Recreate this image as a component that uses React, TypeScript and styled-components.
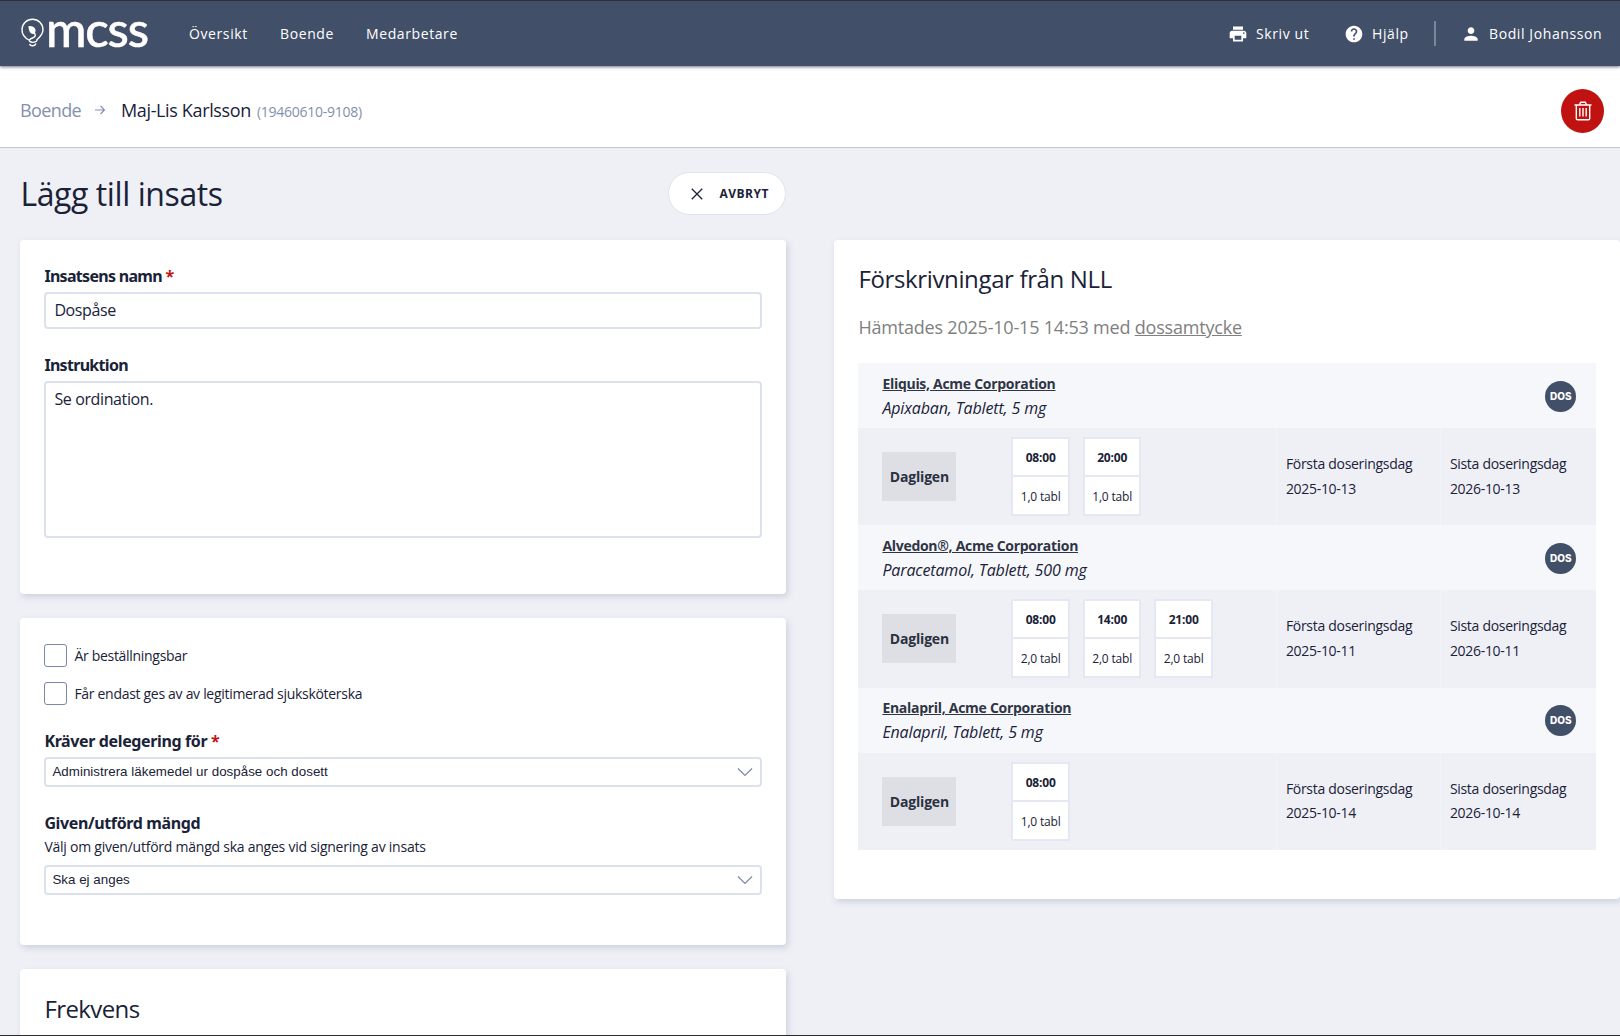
import * as React from 'react'
import styled, { createGlobalStyle } from 'styled-components'
import { MdPrint, MdHelp, MdPerson } from 'react-icons/md'

const GlobalStyle = createGlobalStyle`
  * {
    box-sizing: border-box;
  }

  body {
    margin: 0;
    height: 1036px;
    overflow: hidden;
    background: #eff0f6;
    color: #1a2238;
    font-family: 'Open Sans', 'Noto Sans', sans-serif;
  }

  svg {
    flex-shrink: 0;
  }
`

const Page = styled.div`
  height: 1036px;
  overflow: hidden;
  border-top: 1px solid #332f35;
  border-bottom: 1px solid #2b2b2e;
`

const Topbar = styled.nav`
  position: relative;
  display: flex;
  align-items: center;
  height: 65px;
  padding: 0 16px 0 21px;
  background: #424f68;
  color: white;
  box-shadow: 0 1px 3px rgba(66, 79, 104, 0.8);
`

const Logo = styled.div`
  display: flex;
  align-items: center;
  width: 168px;
  height: 65px;
  padding-bottom: 2px;
`

const LogoText = styled.span`
  margin: -8px 0 0 2px;
  font-family: Lato, sans-serif;
  font-size: 49px;
  font-weight: 500;
  line-height: 65px;
  letter-spacing: -1.2px;
  -webkit-text-stroke: 0.5px white;
`

const NavLink = styled.a<{ $width: number }>`
  width: ${(p) => p.$width}px;
  font-size: 14px;
  font-weight: 500;
  line-height: 20px;
  letter-spacing: 0.6px;
  white-space: nowrap;
`

const TopbarRight = styled.div`
  display: flex;
  align-items: center;
  margin-left: auto;
`

const TopbarAction = styled(NavLink)`
  display: flex;
  align-items: center;
  gap: 8px;
`

const Divider = styled.div`
  width: 2px;
  height: 25px;
  margin-right: 25px;
  background: #7d8698;
`

const CrumbBar = styled.div`
  display: flex;
  align-items: center;
  height: 82px;
  padding: 7px 16px 0 20px;
  background: white;
  border-bottom: 1px solid #bfc6de;
  font-size: 18px;
`

const Crumb = styled.a`
  width: 75px;
  color: #8290ad;
  letter-spacing: -0.6px;
`

const CrumbName = styled.span`
  margin-left: 15px;
  letter-spacing: -0.36px;
`

const CrumbId = styled.span`
  margin: 2px 0 0 6px;
  color: #8290ad;
  font-size: 14px;
  letter-spacing: -0.26px;
`

const DeleteButton = styled.button`
  display: flex;
  align-items: center;
  justify-content: center;
  width: 43px;
  height: 44px;
  margin: 1px 0 0 auto;
  padding: 0;
  border: 0;
  border-radius: 50%;
  background: #c11212;
`

const Main = styled.main`
  display: grid;
  grid-template-columns: 766px 786px;
  column-gap: 48px;
  padding-left: 20.4px;
`

const TitleRow = styled.div`
  display: flex;
  grid-column: 1 / -1;
  align-items: center;
  justify-content: space-between;
  width: 766px;
  height: 92px;
`

const Title = styled.h1`
  margin: -2px 0 0;
  font-size: 32px;
  font-weight: 400;
  letter-spacing: -0.42px;
`

const CancelButton = styled.button`
  display: flex;
  align-items: center;
  gap: 16px;
  width: 118px;
  height: 43px;
  margin-top: -1px;
  padding: 0 0 0 22px;
  border: 1px solid #dfe3f0;
  border-radius: 22px;
  background: white;
  color: #1a2238;
  font-family: inherit;
  font-size: 12px;
  font-weight: 700;
  letter-spacing: 0.5px;
`

const Card = styled.section<{ $height: number }>`
  height: ${(p) => p.$height}px;
  padding: 24px;
  border-radius: 4px;
  background: white;
  box-shadow: 2px 3px 6px rgba(120, 140, 170, 0.3);
`

const FormColumn = styled.div`
  display: flex;
  flex-direction: column;
  gap: 24px;
`

const CardTitle = styled.h2`
  margin: -1px 0 0;
  font-size: 24px;
  font-weight: 400;
  line-height: 32px;
  letter-spacing: -0.36px;
`

const FormTitle = styled(CardTitle)`
  margin: 0;
  letter-spacing: -0.6px;
`

const Label = styled.label<{ $tight?: boolean }>`
  display: block;
  height: 28px;
  font-family: 'Noto Sans', sans-serif;
  font-size: 16px;
  font-weight: 700;
  line-height: 25px;
  letter-spacing: ${(p) => (p.$tight ? '-0.7px' : '-0.37px')};
`

const Required = styled.span`
  color: #c11212;
`

const Input = styled.input`
  display: block;
  width: 718px;
  height: 37px;
  margin-bottom: 24px;
  padding: 0 8px 1px;
  border: 2px solid #dde1ee;
  border-radius: 4px;
  background: white;
  color: #1a2238;
  font-family: inherit;
  font-size: 16px;
  letter-spacing: -0.4px;
`

const Textarea = styled.textarea`
  display: block;
  width: 718px;
  height: 157px;
  padding: 4px 8px;
  border: 2px solid #dde1ee;
  border-radius: 4px;
  color: #1a2238;
  font-family: inherit;
  font-size: 16px;
  line-height: 24px;
  letter-spacing: -0.38px;
  resize: none;
`

const CheckList = styled.div`
  margin: -5px 0 17px;
`

const CheckRow = styled.label`
  display: flex;
  align-items: center;
  gap: 7px;
  height: 37.5px;
  font-size: 14px;
  letter-spacing: -0.3px;
`

const CheckBox = styled.input`
  appearance: none;
  width: 23px;
  height: 23px;
  margin: 0;
  border: 1px solid #7b87a5;
  border-radius: 3px;
  background: white;
`

const Help = styled.p`
  height: 29px;
  margin: -3px 0 0;
  font-size: 14px;
  line-height: 21px;
  letter-spacing: -0.24px;
`

const SelectBox = styled.div`
  display: flex;
  align-items: center;
  justify-content: space-between;
  width: 718px;
  height: 30px;
  margin-bottom: 24px;
  padding: 0 7px 0 6px;
  border: 2px solid #dde1ee;
  border-radius: 4px;
  font-family: 'Liberation Sans', Arial, sans-serif;
  font-size: 13.33px;
`

const SelectText = styled.span`
  margin-top: -1px;
  letter-spacing: 0.03px;
`

const Fetched = styled.p`
  margin: 19px 0 22px;
  color: #808080;
  font-size: 18px;
  line-height: 27px;
  letter-spacing: -0.2px;
`

const DrugHead = styled.div`
  display: flex;
  align-items: center;
  justify-content: space-between;
  height: 65px;
  padding: 1px 20px 0 24px;
  background: #f6f7fb;
`

const DrugName = styled.a`
  display: block;
  color: #2f3545;
  font-size: 14px;
  font-weight: 700;
  line-height: 24px;
  letter-spacing: -0.29px;
  text-decoration: underline;
`

const DrugForm = styled.div`
  font-size: 16px;
  font-style: italic;
  line-height: 25px;
  letter-spacing: -0.13px;
`

const DosBadge = styled.span`
  width: 31px;
  height: 31px;
  border-radius: 50%;
  background: #424f68;
  color: white;
  font-family: Inter, sans-serif;
  font-size: 10px;
  font-weight: 800;
  line-height: 31px;
  text-align: center;
`

const DrugBody = styled.div`
  display: grid;
  grid-template-columns: 153px 265px 164px 155px;
  height: 97.3px;
  background: #eff0f6;
`

const Daily = styled.div`
  align-self: center;
  width: 74px;
  height: 49px;
  margin-left: 24px;
  background: #dedfe5;
  color: #2b3140;
  font-size: 14px;
  font-weight: 700;
  line-height: 49px;
  text-align: center;
  letter-spacing: -0.2px;
`

const Doses = styled.div`
  display: flex;
  gap: 13px;
  padding-top: 9px;
`

const Dose = styled.div`
  width: 58.5px;
  height: 79px;
  border: 2px solid #e5e8f2;
  background: white;
  font-size: 12px;
  line-height: 40px;
  text-align: center;
  letter-spacing: -0.2px;
`

const DoseTime = styled.div`
  height: 38px;
  border-bottom: 2px solid #e5e8f2;
  font-weight: 700;
  line-height: 38px;
`

const DateCell = styled.div`
  padding: 24px 0 0 8.500px;
  border-left: 1px solid #f3f4f9;
  font-size: 14px;
  line-height: 24.5px;
  letter-spacing: -0.3px;
  white-space: nowrap;
`

const LogoMark = () => (
  <svg width='23' height='29' viewBox='0 0 23 29' fill='none' stroke='white' strokeWidth='1.4'>
    <path d='M8 22C3.600 19.700 1 16 1 11.700a10.500 10.500 0 1 1 21 0c0 4.300-3 7.400-6.500 10.300' />
    <path d='M7.500 8c3 0 6.500.5 7 4 .3 2-.8 4-2.500 4-3 0-4.500-4-4.500-8z' fill='white' stroke='none' />
    <path d='M12.500 14c3 3 2 5-1 6s-4.500 3-1.500 4 6-.5 6-2M8.500 26c1 2.500 5.500 2.500 6.500-.5' />
  </svg>
)

const Chevron = () => (
  <svg width='16' height='10' viewBox='0 0 16 10' fill='none' stroke='#7b8aa8' strokeWidth='1.2'>
    <path d='M1 1.500l7 7 7-7' />
  </svg>
)

const TrashIcon = () => (
  <svg width='18' height='20' viewBox='0 0 18 20' fill='none' stroke='white' strokeWidth='1.400'>
    <path d='M.5 4h17M5.500 3.800l1.200-2.600h4.600l1.200 2.600M2.300 4v13.500q0 1.300 1.300 1.300h10.800q1.300 0 1.300-1.300V4M5.800 7v8.500M9 7v8.500M12.200 7v8.500' />
  </svg>
)

type Drug = {
  name: string
  form: string
  doses: [string, string][]
  first: string
  last: string
}

const drugs: Drug[] = [
  {
    name: 'Eliquis, Acme Corporation',
    form: 'Apixaban, Tablett, 5 mg',
    doses: [['08:00', '1,0 tabl'], ['20:00', '1,0 tabl']],
    first: '2025-10-13',
    last: '2026-10-13',
  },
  {
    name: 'Alvedon®, Acme Corporation',
    form: 'Paracetamol, Tablett, 500 mg',
    doses: [['08:00', '2,0 tabl'], ['14:00', '2,0 tabl'], ['21:00', '2,0 tabl']],
    first: '2025-10-11',
    last: '2026-10-11',
  },
  {
    name: 'Enalapril, Acme Corporation',
    form: 'Enalapril, Tablett, 5 mg',
    doses: [['08:00', '1,0 tabl']],
    first: '2025-10-14',
    last: '2026-10-14',
  },
]

const Prescription: React.FunctionComponent<{ drug: Drug }> = ({ drug }) => (
  <>
    <DrugHead>
      <div>
        <DrugName>{drug.name}</DrugName>
        <DrugForm>{drug.form}</DrugForm>
      </div>
      <DosBadge>DOS</DosBadge>
    </DrugHead>
    <DrugBody>
      <Daily>Dagligen</Daily>
      <Doses>
        {drug.doses.map(([time, amount]) => (
          <Dose key={time}>
            <DoseTime>{time}</DoseTime>
            {amount}
          </Dose>
        ))}
      </Doses>
      <DateCell>
        Första doseringsdag
        <br />
        {drug.first}
      </DateCell>
      <DateCell>
        Sista doseringsdag
        <br />
        {drug.last}
      </DateCell>
    </DrugBody>
  </>
)

const App: React.FunctionComponent = () => (
  <>
    <GlobalStyle />
    <Page>
      <Topbar>
        <Logo>
          <LogoMark />
          <LogoText>mcss</LogoText>
        </Logo>
        <NavLink $width={91}>Översikt</NavLink>
        <NavLink $width={86}>Boende</NavLink>
        <NavLink $width={100}>Medarbetare</NavLink>
        <TopbarRight>
          <TopbarAction $width={116}>
            <MdPrint size={20} />
            Skriv ut
          </TopbarAction>
          <TopbarAction $width={90}>
            <MdHelp size={20} />
            Hjälp
          </TopbarAction>
          <Divider />
          <TopbarAction $width={143}>
            <MdPerson size={20} />
            Bodil Johansson
          </TopbarAction>
        </TopbarRight>
      </Topbar>
      <CrumbBar>
        <Crumb>Boende</Crumb>
        <svg width='11' height='10' viewBox='0 0 11 10' fill='none' stroke='#8290ad' strokeWidth='1.1'>
          <path d='M0 5h9.500M5.500 1l4 4-4 4' />
        </svg>
        <CrumbName>Maj-Lis Karlsson</CrumbName>
        <CrumbId>(19460610-9108)</CrumbId>
        <DeleteButton>
          <TrashIcon />
        </DeleteButton>
      </CrumbBar>
      <Main>
        <TitleRow>
          <Title>Lägg till insats</Title>
          <CancelButton>
            <svg width='12' height='12' viewBox='0 0 12 12' stroke='#1a2238' strokeWidth='1.3'>
              <path d='M.8.8l10.400 10.400M11.200.8L.8 11.200' />
            </svg>
            AVBRYT
          </CancelButton>
        </TitleRow>
        <FormColumn>
          <Card $height={354}>
            <Label $tight>
              Insatsens namn <Required>*</Required>
            </Label>
            <Input defaultValue='Dospåse' />
            <Label $tight>Instruktion</Label>
            <Textarea defaultValue='Se ordination.' />
          </Card>
          <Card $height={327}>
            <CheckList>
              <CheckRow>
                <CheckBox type='checkbox' />
                Är beställningsbar
              </CheckRow>
              <CheckRow>
                <CheckBox type='checkbox' />
                Får endast ges av av legitimerad sjuksköterska
              </CheckRow>
            </CheckList>
            <Label>
              Kräver delegering för <Required>*</Required>
            </Label>
            <SelectBox>
              <SelectText>Administrera läkemedel ur dospåse och dosett</SelectText>
              <Chevron />
            </SelectBox>
            <Label>Given/utförd mängd</Label>
            <Help>Välj om given/utförd mängd ska anges vid signering av insats</Help>
            <SelectBox>
              <SelectText>Ska ej anges</SelectText>
              <Chevron />
            </SelectBox>
          </Card>
          <Card $height={200}>
            <FormTitle>Frekvens</FormTitle>
          </Card>
        </FormColumn>
        <Card $height={659}>
          <CardTitle>Förskrivningar från NLL</CardTitle>
          <Fetched>
            Hämtades 2025-10-15 14:53 med <u>dossamtycke</u>
          </Fetched>
          {drugs.map((drug) => (
            <Prescription key={drug.name} drug={drug} />
          ))}
        </Card>
      </Main>
    </Page>
  </>
)

export default App
